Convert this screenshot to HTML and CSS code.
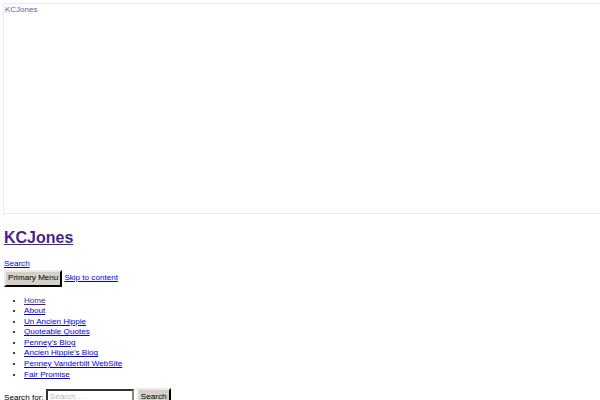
FILE: index.html
```html
<!DOCTYPE html>
<html>
<head>
<meta charset="utf-8">
<link rel="stylesheet" href="styles.css">
</head>
<body>
<div class="frame"><a class="frame-link" href="#">KCJones</a></div>
<h1 class="site-title"><a href="#">KCJones</a></h1>
<div class="search-toggle"><a href="#" class="link">Search</a></div>
<div class="nav-row">
  <button class="btn">Primary Menu</button>
  <a href="#" class="link">Skip to content</a>
</div>
<ul class="menu">
  <li><a href="#" class="visited">Home</a></li>
  <li><a href="#" class="link">About</a></li>
  <li><a href="#" class="link">Un Ancien Hippie</a></li>
  <li><a href="#" class="link">Quoteable Quotes</a></li>
  <li><a href="#" class="link">Penney's Blog</a></li>
  <li><a href="#" class="link">Ancien Hippie's Blog</a></li>
  <li><a href="#" class="link">Penney Vanderbilt WebSite</a></li>
  <li><a href="#" class="link">Fair Promise</a></li>
</ul>
<form class="search-form">
  <label class="label">Search for: <input class="field" type="text" placeholder="Search …"></label>
  <button class="btn btn-search" type="button">Search</button>
</form>
</body>
</html>
```

FILE: styles.css
```css
html, body {
  background: #ffffff;
}
body {
  margin: 3px 0 0 3px;
  font-family: "Liberation Sans", Arial, sans-serif;
  font-size: 8.1px;
  line-height: 10.5px;
  color: #000;
  overflow: hidden;
}
.frame {
  width: 640px;
  height: 207px;
  border: 1.5px solid #ebebeb;
  padding: 1px 1px;
  box-sizing: content-box;
}
.frame-link {
  color: #7b52a8;
  text-decoration: none;
  font-size: 8px;
}
.site-title {
  margin: 15px 0 12px 1px;
  font-size: 16px;
  line-height: 18px;
  font-weight: bold;
}
.site-title a {
  color: #4e1f86;
}
.search-toggle {
  margin-left: 1px;
}
.link {
  color: #0000ee;
}
.visited {
  color: #551a8b;
}
.nav-row {
  display: flex;
  align-items: center;
  gap: 2px;
  margin-left: 1px;
}
.btn {
  font-family: "Liberation Sans", Arial, sans-serif;
  font-size: 8.1px;
  line-height: 10px;
  padding: 1px 2px;
  background: #d4d0c8;
  border: 2px outset #ece9e4;
  border-right-color: #444;
  border-bottom-color: #444;
  color: #000;
}
.nav-row .btn {
  height: 17px;
}
.menu {
  margin: 9px 0 8px 1px;
  padding-left: 20px;
}
.menu li {
  line-height: 10.6px;
}
.search-form {
  display: flex;
  align-items: center;
  gap: 3px;
  margin-left: 1px;
}
.field {
  width: 80px;
  height: 10px;
  font-size: 8.1px;
  font-family: "Liberation Sans", Arial, sans-serif;
  border: 2px inset #888;
  padding: 1px 2px;
}
.field::placeholder {
  color: #b8b8c8;
}
.btn-search {
  height: 17px;
}
```
